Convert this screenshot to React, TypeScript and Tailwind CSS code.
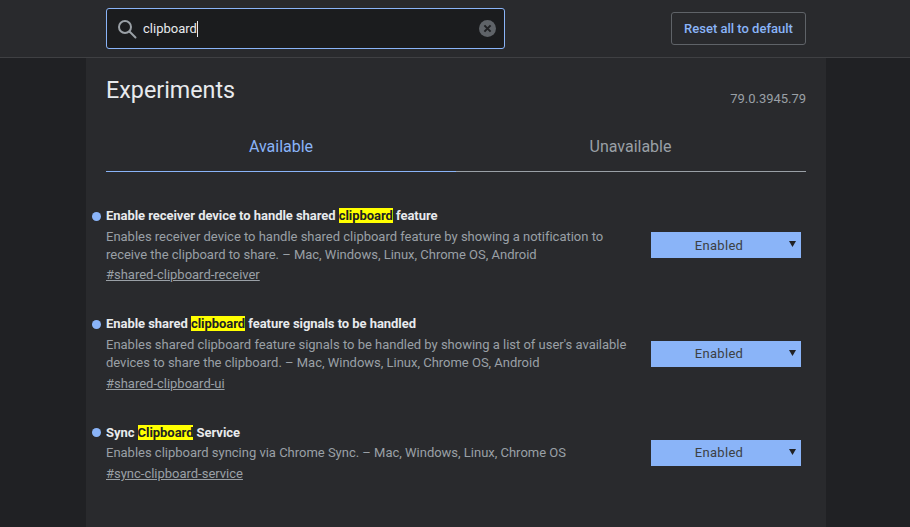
import React from "react";

const H = ({ children }: { children: React.ReactNode }) => (
  <span className="bg-[#ffff00] text-[#202124]">{children}</span>
);

type RowProps = { title: React.ReactNode; desc: React.ReactNode; link: string; mb: string; titleClass?: string; descClass?: string; linkClass?: string; dotClass?: string; selectTextClass?: string };

function Row({ title, desc, link, mb, titleClass = "h-[20px]", descClass = "mt-[2px]", linkClass = "mt-[2px]", dotClass = "top-[6px]", selectTextClass = "pt-0" }: RowProps) {
  return (
    <div className={`relative flex items-center justify-between ${mb}`}>
      <span className={`absolute left-[-14px] ${dotClass} h-[9px] w-[9px] rounded-full bg-[#8ab4f8]`} />
      <div className="w-[530px]">
        <div className={`${titleClass} text-[13px] font-bold leading-[20px] tracking-[-0.05px] text-[#e8eaed]`}>{title}</div>
        <div className={`${descClass} text-[13px] leading-[18px] tracking-[-0.01px] text-[#9aa0a6]`}>{desc}</div>
        <div className={`${linkClass} h-[20px] text-[13px] leading-[20px] tracking-[-0.01px] text-[#9aa0a6] underline`}>{link}</div>
      </div>
      <div className="mr-[5px] flex h-[26px] w-[150px] items-center bg-[#8ab4f8] text-[#3c4043]">
        <span className={`flex-1 pr-[2px] ${selectTextClass} text-center text-[13px] tracking-[0.3px]`}>Enabled</span>
        <svg width="7" height="6" viewBox="0 0 7 6" className="mr-[5px] mb-[2px]"><path d="M0 0h7L3.5 6z" fill="#202124" /></svg>
      </div>
    </div>
  );
}

export default function App() {
  return (
    <div className="flex h-[527px] w-[910px] flex-col overflow-hidden bg-[#202124] font-['Roboto',sans-serif]">
      <header className="flex h-[58px] shrink-0 items-start justify-between border-b border-[#3f4043] bg-[#292a2d] pl-[106px] pr-[104px]">
        <div className="mt-[8px] flex h-[41px] w-[399px] items-center rounded-[3px] border border-[#8ab4f8] bg-[#1b1c1e] pl-[10px] pr-[8px]">
          <svg width="20" height="20" viewBox="0 0 20 20" fill="none" stroke="#9aa0a6" strokeWidth="2">
            <circle cx="8" cy="8" r="6" />
            <path d="M12.5 12.5 18.5 18.5" strokeLinecap="round" />
          </svg>
          <span className="ml-[6px] text-[13px] text-[#e8eaed]">clipboard</span>
          <span className="h-[16px] w-px bg-[#e8eaed]" />
          <svg width="17" height="17" viewBox="0 0 17 17" className="ml-auto">
            <circle cx="8.5" cy="8.5" r="8.5" fill="#5f6368" />
            <path d="M5.4 5.4 11.6 11.6M11.6 5.4 5.4 11.6" stroke="#202124" strokeWidth="2" />
          </svg>
        </div>
        <button className="mt-[12px] h-[33px] w-[135px] rounded-[3px] border border-[#5f6368] text-[13px] font-medium text-[#8ab4f8]">
          Reset all to default
        </button>
      </header>
      <main className="ml-[86px] w-[740px] flex-1 bg-[#292a2d] px-[20px]">
        <div className="flex h-[47px] items-start justify-between pt-[18px]">
          <h1 className="text-[23.3px] leading-[29px] text-[#e8eaed]">Experiments</h1>
          <span className="mt-[15px] text-[13px] leading-[16px] tracking-[-0.03px] text-[#9aa0a6]">79.0.3945.79</span>
        </div>
        <div className="mt-[19px] flex">
          <div className="flex h-[48px] w-[350px] items-center justify-center border-b border-[#8ab4f8] pb-[1px] text-[16px] text-[#8ab4f8]">Available</div>
          <div className="flex h-[48px] w-[350px] items-center justify-center border-b border-[#9aa0a6] pb-[1px] pr-[1px] text-[16px] text-[#9aa0a6]">Unavailable</div>
        </div>
        <div className="mt-[33px]">
          <Row
            mb="mb-[29px]"
            titleClass="h-[21px] pt-[1px]"
            linkClass="mt-[1px]"
            dotClass="top-[7px]"
            selectTextClass="pt-[2px]"
            title={<>Enable receiver device to handle shared <H>clipboard</H> feature</>}
            desc={<>Enables receiver device to handle shared clipboard feature by showing a notification to receive the clipboard to share. – Mac, Windows, Linux, Chrome OS, Android</>}
            link="#shared-clipboard-receiver"
          />
          <Row
            mb="mb-[28px]"
            title={<>Enable shared <H>clipboard</H> feature signals to be handled</>}
            desc={<>Enables shared clipboard feature signals to be handled by showing a list of user's available devices to share the clipboard. – Mac, Windows, Linux, Chrome OS, Android</>}
            link="#shared-clipboard-ui"
          />
          <Row
            mb="mb-0"
            titleClass="h-[21px] pt-[1px]"
            descClass="mt-[1px]"
            title={<>Sync <H>Clipboard</H> Service</>}
            desc={<>Enables clipboard syncing via Chrome Sync. – Mac, Windows, Linux, Chrome OS</>}
            link="#sync-clipboard-service"
          />
        </div>
      </main>
    </div>
  );
}
